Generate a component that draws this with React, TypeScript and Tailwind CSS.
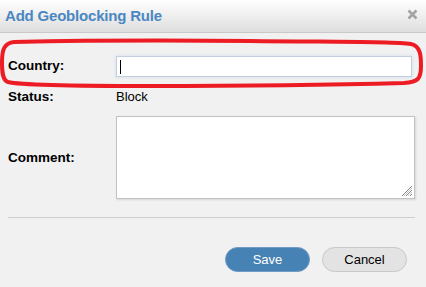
export default function App() {
  return (
    <div className="relative h-[287px] w-[426px] overflow-hidden bg-[#f1f1f1] font-['Liberation_Sans',Arial,sans-serif]">
      <header className="flex h-[33px] items-center justify-between border-b border-[#c9c9c9] bg-gradient-to-b from-white to-[#dedede] pl-[5px] pr-[8px]">
        <h1 className="text-[15px] font-bold tracking-[-0.2px] text-[#4a87c2]">Add Geoblocking Rule</h1>
        <svg width="11" height="11" viewBox="0 0 11 11" className="mb-[4px]">
          <path d="M1.5 1.5L9.5 9.5M9.5 1.5L1.5 9.5" stroke="#a3a3a3" strokeWidth="2.6" />
        </svg>
      </header>

      <div className="px-[8px] pt-[23px]">
        <div className="flex items-center">
          <label className="w-[108px] text-[13.5px] font-bold text-black">Country:</label>
          <div className="flex h-[21px] w-[296px] items-center border border-[#c3cede] bg-white pl-[3px] shadow-[0_0_2px_1px_#dde4ef]">
            <span className="h-[14px] w-px bg-black" />
          </div>
        </div>

        <div className="mt-[10px] flex items-center text-[13px]">
          <span className="w-[108px] text-[13.5px] font-bold">Status:</span>
          <span>Block</span>
        </div>

        <div className="mt-[9px] flex items-center">
          <label className="w-[108px] text-[13.5px] font-bold">Comment:</label>
          <div className="relative h-[83px] w-[299px] border border-[#c2c2c2] bg-white shadow-[1px_1px_2px_#d5d5d5]">
            <svg width="12" height="12" viewBox="0 0 12 12" className="absolute bottom-[1px] right-[1px]">
              <path d="M11 1L1 11M11 5L5 11M11 9L9 11" stroke="#8a8a8a" strokeWidth="1" />
              <path d="M11 3L3 11M11 7L7 11" stroke="#c8c8c8" strokeWidth="1" />
            </svg>
          </div>
        </div>

        <hr className="mt-[18px] w-[407px] border-t border-[#cfcfcf]" />

        <div className="mt-[29px] flex justify-end gap-[12px] pr-[11px]">
          <button className="h-[25px] w-[85px] rounded-full border border-[#6f9bc4] bg-[#4682b4] text-[13px] text-white">
            Save
          </button>
          <button className="h-[25px] w-[85px] rounded-full border border-[#c8c8c8] bg-[#e3e3e3] text-[13px] text-black">
            Cancel
          </button>
        </div>
      </div>

      <svg className="pointer-events-none absolute left-0 top-0" width="426" height="287" viewBox="0 0 426 287">
        <path
          d="M14 42 C60 41 150 40 250 41 C330 42 390 41 411 44 C421 46 421 57 421 66 C421 79 418 82 404 83 C330 85 260 86 150 86 C70 86 20 85 8 82 C2 80 2 70 2 62 C2 50 4 43 14 42 Z"
          fill="none"
          stroke="#ed1c24"
          strokeWidth="4"
        />
      </svg>
    </div>
  );
}
